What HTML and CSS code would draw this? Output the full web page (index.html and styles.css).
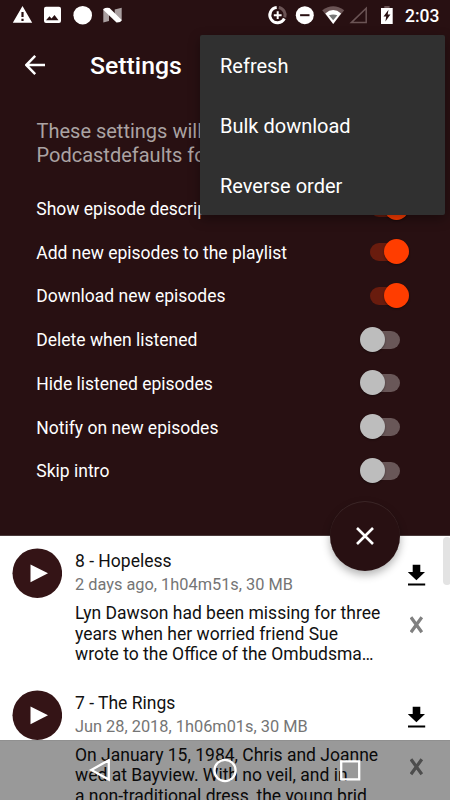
FILE: index.html
```html
<!DOCTYPE html>
<html lang="en">
<head>
<meta charset="utf-8">
<title>Settings</title>
<link rel="stylesheet" href="styles.css">
</head>
<body>
<div class="screen">
  <section class="settings">
    <header class="status">
      <svg class="status-left" width="110" height="30" viewBox="12 0 110 30">
        <path fill="#fff" fill-rule="evenodd" d="M22.5 6 32.2 22.8H12.8ZM21.4 12v5h2.2v-5ZM21.4 18.7v2.2h2.2v-2.2Z"/>
        <path fill="#fff" fill-rule="evenodd" d="M46 6.8h13q2 0 2 2V21q0 2-2 2H46q-2 0-2-2V8.800q0-2 2-2ZM46 20.300H58.500L54.500 15 51.500 18.500 49.500 16.200Z"/>
        <circle cx="82.700" cy="15.200" r="9.300" fill="#fff"/>
        <path fill="#a99fa0" d="M103.300 9 109 13v8l-5.700 1.500ZM121.700 7.700V21l-7-4V9.500Z"/>
        <path fill="#fff" d="M103.300 9Q106 7 109.500 8L121.700 20Q121 22.600 116.500 22.500L103.500 10Z"/>
      </svg>
      <svg class="status-right" width="126" height="30" viewBox="267 0 126 30">
        <g fill="none" stroke-width="3">
          <path stroke="#fff" d="M276.700 7.600A7.600 7.600 0 1 0 284.300 18.500"/>
          <path stroke="#6b5455" d="M278.800 7.600A7.600 7.600 0 0 1 284.800 17.400"/>
          <path stroke="#fff" stroke-width="2" d="M273.800 15.200h7.800M277.700 11.300v7.800"/>
        </g>
        <circle cx="304.800" cy="15.200" r="9" fill="#fff"/>
        <path fill="#281012" d="M300.100 14.200h9.400v2h-9.400Z"/>
        <path fill="#6b5455" d="M322.200 10.300Q333.200 2 344.200 10.300L333.200 24Z"/>
        <path fill="#fff" d="M325.300 13.400Q333.200 6.800 341.100 13.400L333.200 24Z"/>
        <path fill="#777" d="M329 15.300q4.200-1.600 8.400 0L333.200 20.200Z"/>
        <path fill="none" stroke="#6b5455" stroke-width="1.500" d="M366.200 8.200V22.600H351.300Z"/>
        <path fill="#6b5455" d="M384.300 6h5.300v2.500h-5.300Z"/>
        <path fill="#fff" d="M381 8h11.700v16H381Z"/>
        <path fill="#281012" d="M388.500 9.800 383.500 16.600h2.700l-.8 4.900 5-7h-2.700Z"/>
      </svg>
      <span class="clock">2:03</span>
    </header>
    <div class="toolbar">
      <svg width="20" height="20" viewBox="0 0 20 20"><path d="M20 10H1.500M10.200.9 1.200 10 10.200 19.100" fill="none" stroke="#fff" stroke-width="2.500"/></svg>
      <h1>Settings</h1>
    </div>
    <p class="intro">These settings will override the Podcastdefaults for this one</p>
    <div class="options">
      <div class="option"><span>Show episode descriptions</span><i class="switch on"></i></div>
      <div class="option"><span>Add new episodes to the playlist</span><i class="switch on"></i></div>
      <div class="option"><span>Download new episodes</span><i class="switch on"></i></div>
      <div class="option"><span>Delete when listened</span><i class="switch"></i></div>
      <div class="option"><span>Hide listened episodes</span><i class="switch"></i></div>
      <div class="option"><span>Notify on new episodes</span><i class="switch"></i></div>
      <div class="option"><span>Skip intro</span><i class="switch"></i></div>
    </div>
  </section>
  <main class="episodes">
    <article class="episode">
      <svg class="play" width="50" height="50" viewBox="0 0 50 50"><circle cx="25.300" cy="25.200" r="24.800" fill="#341416"/><path fill="#fff" d="M18.500 16.500 36 25.300 18.500 34.200Z"/></svg>
      <div class="text">
        <h2>8 - Hopeless</h2>
        <div class="meta">2 days ago, 1h04m51s, 30 MB</div>
        <p>Lyn Dawson had been missing for three<br>years when her worried friend Sue<br>wrote to the Office of the Ombudsma…</p>
      </div>
      <div class="actions">
        <svg width="18" height="22" viewBox="0 0 18 22"><path d="M4.700.800h7.600v7.300h4.700L8.400 16.200-.100 8.100h4.800ZM-.200 19.600h17.400v2H-.200Z"/></svg>
        <svg class="remove" width="14" height="18" viewBox="0 0 14 18"><path d="M1 1.300 11.800 16.200M11.800 1.300 1 16.200" stroke="#808080" stroke-width="3.200"/></svg>
      </div>
    </article>
    <article class="episode">
      <svg class="play" width="50" height="50" viewBox="0 0 50 50"><circle cx="25.300" cy="25.200" r="24.800" fill="#341416"/><path fill="#fff" d="M18.500 16.500 36 25.300 18.500 34.200Z"/></svg>
      <div class="text">
        <h2>7 - The Rings</h2>
        <div class="meta">Jun 28, 2018, 1h06m01s, 30 MB</div>
        <p>On January 15, 1984, Chris and Joanne<br>wed at Bayview. With no veil, and in<br>a non-traditional dress, the young brid…</p>
      </div>
      <div class="actions">
        <svg width="18" height="22" viewBox="0 0 18 22"><path d="M4.700.800h7.600v7.300h4.700L8.400 16.200-.100 8.100h4.800ZM-.200 19.600h17.400v2H-.200Z"/></svg>
        <svg class="remove" width="14" height="18" viewBox="0 0 14 18"><path d="M1 1.300 11.800 16.200M11.800 1.300 1 16.200" stroke="#808080" stroke-width="3.200"/></svg>
      </div>
    </article>
  </main>
  <div class="scrollbar"></div>
  <div class="fab"><svg width="18" height="18" viewBox="0 0 18 18"><path d="M1 1 17 17M17 1 1 17" stroke="#fff" stroke-width="2.600"/></svg></div>
  <div class="menu">
    <div>Refresh</div>
    <div>Bulk download</div>
    <div>Reverse order</div>
  </div>
  <nav class="navbar">
    <svg width="24" height="24" viewBox="0 0 24 24"><path d="M20.800 1.200V20.600L3.300 10.900Z"/></svg>
    <svg width="24" height="24" viewBox="0 0 24 24"><circle cx="12" cy="11.500" r="10.600"/></svg>
    <svg width="24" height="24" viewBox="0 0 24 24"><path d="M3.200 2.300h18v18h-18Z"/></svg>
  </nav>
</div>
</body>
</html>
```
FILE: styles.css
```css
* { box-sizing: border-box; }
body { margin: 0; font-family: Roboto, sans-serif; }
h1, h2, p { margin: 0; font-weight: 400; }
svg { display: block; flex: none; }
.screen { position: relative; width: 450px; height: 800px; overflow: hidden; background: #fff; }
.settings { height: 536px; background: #281012; border-bottom: 1px solid #4a3a3b; color: #fff; }
.status { display: flex; height: 30px; padding-left: 12px; }
.status-right { margin-left: 145px; }
.clock { margin-left: 12px; font-size: 17.5px; font-weight: 500; line-height: 32px; }
.toolbar { display: flex; align-items: center; height: 70px; padding-left: 25px; gap: 45px; }
.toolbar h1 { font-size: 24.8px; font-weight: 500; line-height: 30px; padding-top: 1px; }
.intro { width: 350px; height: 86.6px; padding: 19px 0 0 36.5px; font-size: 20px; line-height: 24px; color: #aba3a3; }
.options { padding: 0 50px 0 36.3px; }
.option { display: flex; align-items: center; justify-content: space-between; height: 43.75px; font-size: 17.5px; }
.option span { padding-top: 1px; }
.switch { position: relative; width: 30px; height: 18px; border-radius: 9px; background: #695758; }
.switch::after { content: ""; position: absolute; left: -10px; top: -4px; width: 25px; height: 25px; border-radius: 50%; background: #bdbdbd; box-shadow: 0 1px 2px rgba(0,0,0,.4); }
.switch.on { background: #691c0e; }
.switch.on::after { left: 14px; background: #ff3d00; }
.episode { display: flex; height: 141.75px; padding: 12px 24.5px 0 12px; }
.text { width: 310px; margin-left: 13px; white-space: nowrap; }
.text h2 { font-size: 17.5px; line-height: 23px; padding-top: 2px; color: #111; }
.meta { font-size: 16.35px; line-height: 23px; color: #757575; }
.text p { margin-top: 7px; font-size: 17.5px; line-height: 20.5px; color: #111; }
.actions { display: flex; flex-direction: column; align-items: center; width: 18px; margin: 16px 0 0 auto; }
.remove { margin-top: 30px; }
.scrollbar { position: absolute; left: 442.5px; top: 537px; width: 8px; height: 48px; border-radius: 4px; background: #e3e3e3; }
.fab { position: absolute; left: 330px; top: 501px; width: 70px; height: 70px; border-radius: 50%; display: flex; align-items: center; justify-content: center; background: #281012; box-shadow: 0 4px 9px rgba(0,0,0,.3), inset 0 1px 0 #3b2627; }
.menu { position: absolute; left: 200px; top: 35px; width: 245px; height: 180px; border-radius: 2px; background: #303030; box-shadow: 0 4px 12px rgba(0,0,0,.35); color: #fff; font-size: 20px; }
.menu div { height: 60px; line-height: 62px; padding-left: 20px; }
.navbar { position: absolute; left: 0; top: 740px; width: 450px; height: 60px; display: flex; align-items: center; justify-content: space-between; padding: 0 88px; background: rgba(0,0,0,.4); border-top: 1px solid rgba(0,0,0,.06); }
.navbar svg { fill: none; stroke: #fff; stroke-width: 2.300; }
```
